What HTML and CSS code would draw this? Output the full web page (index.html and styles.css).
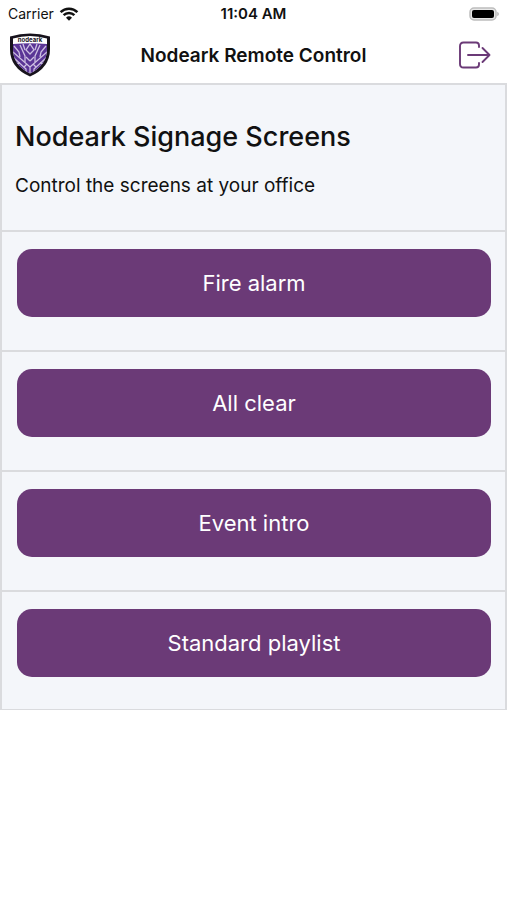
FILE: index.html
```html
<!DOCTYPE html>
<html lang="en">
<head>
    <meta charset="UTF-8">
    <meta name="viewport" content="width=device-width, initial-scale=1">
    <title>Nodeark Remote Control</title>
    <link rel="stylesheet" href="styles.css">
</head>
<body>

<div class="status-bar">
    <div class="carrier">
        <span>Carrier</span>
        <svg width="20" height="14" viewBox="0 0 20 14" aria-hidden="true">
            <path d="M1.6 5.2a12 12 0 0 1 16.8 0M4.6 8.2a7.8 7.8 0 0 1 10.8 0" fill="none" stroke="#111" stroke-width="2.5"/>
            <path d="M10 13.8l-3-3a4.3 4.3 0 0 1 6 0z" fill="#111"/>
        </svg>
    </div>
    <time class="clock">11:04 AM</time>
    <svg class="battery" width="30" height="14" viewBox="0 0 30 14" aria-hidden="true">
        <rect x="1" y="1" width="26" height="12" rx="4" fill="#e8e8e8" stroke="#bdbdbd" stroke-width="1.5"/>
        <rect x="3" y="3" width="22" height="8" rx="2" fill="#000"/>
        <path d="M28.2 4.8q1.800 .8 1.800 2.2t-1.800 2.2z" fill="#bdbdbd"/>
    </svg>
</div>

<header>
    <svg class="logo" width="42" height="46" viewBox="0 0 42 46" role="img" aria-label="Nodeark">
        <defs>
            <clipPath id="shield">
                <path d="M4 6.500Q21 1.500 38 6.500V17q0 16-17 24.500Q4 33 4 17z"/>
            </clipPath>
        </defs>
        <path d="M1 4.500Q21-1.500 41 4.500V17q0 19-20 27.500Q1 36 1 17z" fill="#17131c"/>
        <g clip-path="url(#shield)">
            <rect width="42" height="46" fill="#fff"/>
            <path d="M0 12.500Q21 10 42 12.500V46H0z" fill="#5a3596"/>
            <g fill="none" stroke="#cdbfe2" stroke-width="1.300">
                <path d="M21 41V34M21 22l-4-4 4-6 4 6zM21 29l-4-4M21 29l4-4M21 35L4 20M21 35l17-15"/>
                <path d="M16 30V24l-5-11M26 30V24l5-11M11 25l-1-5-5-6M31 25l1-5 5-6"/>
                <path d="M16 18l-2-6M26 18l2-6M17 40v-3L5 26M25 40v-3l12-11M11 31l-6 1M31 31l6 1M18 32l-3 3M24 32l3 3"/>
            </g>
        </g>
        <text x="21" y="10" text-anchor="middle">nodeark</text>
    </svg>
    <h1>Nodeark Remote Control</h1>
    <button class="logout" type="button" aria-label="Log out">
        <svg width="32" height="28" viewBox="0 0 32 28" aria-hidden="true">
            <path d="M20 6V4.500Q20 1.500 17 1.500H4.500Q1 1.500 1 5v18q0 3.500 3.500 3.500H17q3 0 3-3V22M9 14h21.500M23.500 7l7 7-7 7" fill="none" stroke="#6b3a77" stroke-width="1.900" stroke-linecap="round" stroke-linejoin="round"/>
        </svg>
    </button>
</header>

<main>
    <section class="intro">
        <h2>Nodeark Signage Screens</h2>
        <p>Control the screens at your office</p>
    </section>
    <section class="row"><button class="action" type="button">Fire alarm</button></section>
    <section class="row"><button class="action" type="button">All clear</button></section>
    <section class="row"><button class="action" type="button">Event intro</button></section>
    <section class="row"><button class="action" type="button">Standard playlist</button></section>
</main>

</body>
</html>
```
FILE: styles.css
```css
* {
    box-sizing: border-box;
}
body {
    margin: 0;
    background-color: #fff;
    color: #111;
    font-family: Inter, "Liberation Sans", sans-serif;
}
svg {
    display: block;
}
.status-bar {
    display: grid;
    grid-template-columns: 1fr auto 1fr;
    align-items: center;
    height: 27px;
    padding: 0 8px;
    font-size: 14px;
}
.carrier {
    display: flex;
    align-items: center;
    gap: 5px;
}
.clock {
    font-size: 15px;
    font-weight: 600;
}
.battery {
    justify-self: end;
}
header {
    display: grid;
    grid-template-columns: 1fr auto 1fr;
    align-items: center;
    height: 56px;
    padding: 0 9px;
}
.logo text {
    font-size: 6px;
    font-weight: 700;
    fill: #17131c;
}
h1 {
    margin: 0;
    font-size: 19px;
    font-weight: 600;
}
.logout {
    justify-self: end;
    margin-right: 7px;
    padding: 0;
    border: none;
    background: none;
    cursor: pointer;
}
main {
    border: 2px solid #dadbde;
    border-bottom-width: 1px;
    background-color: #f4f6fa;
}
.intro {
    padding: 32px 13px;
}
h2 {
    margin: 0 0 16px;
    font-size: 27px;
    font-weight: 500;
    line-height: 40px;
}
p {
    margin: 0;
    font-size: 19px;
    line-height: 25px;
}
.row {
    padding: 17px 14px 32px 15px;
    border-top: 2px solid #dadbde;
}
.row:last-child {
    padding-bottom: 31px;
}
.action {
    display: block;
    width: 100%;
    height: 68px;
    margin-bottom: 1px;
    border: none;
    border-radius: 15px;
    background-color: #6b3a77;
    color: #fff;
    font-family: inherit;
    font-size: 22px;
    cursor: pointer;
}
```
